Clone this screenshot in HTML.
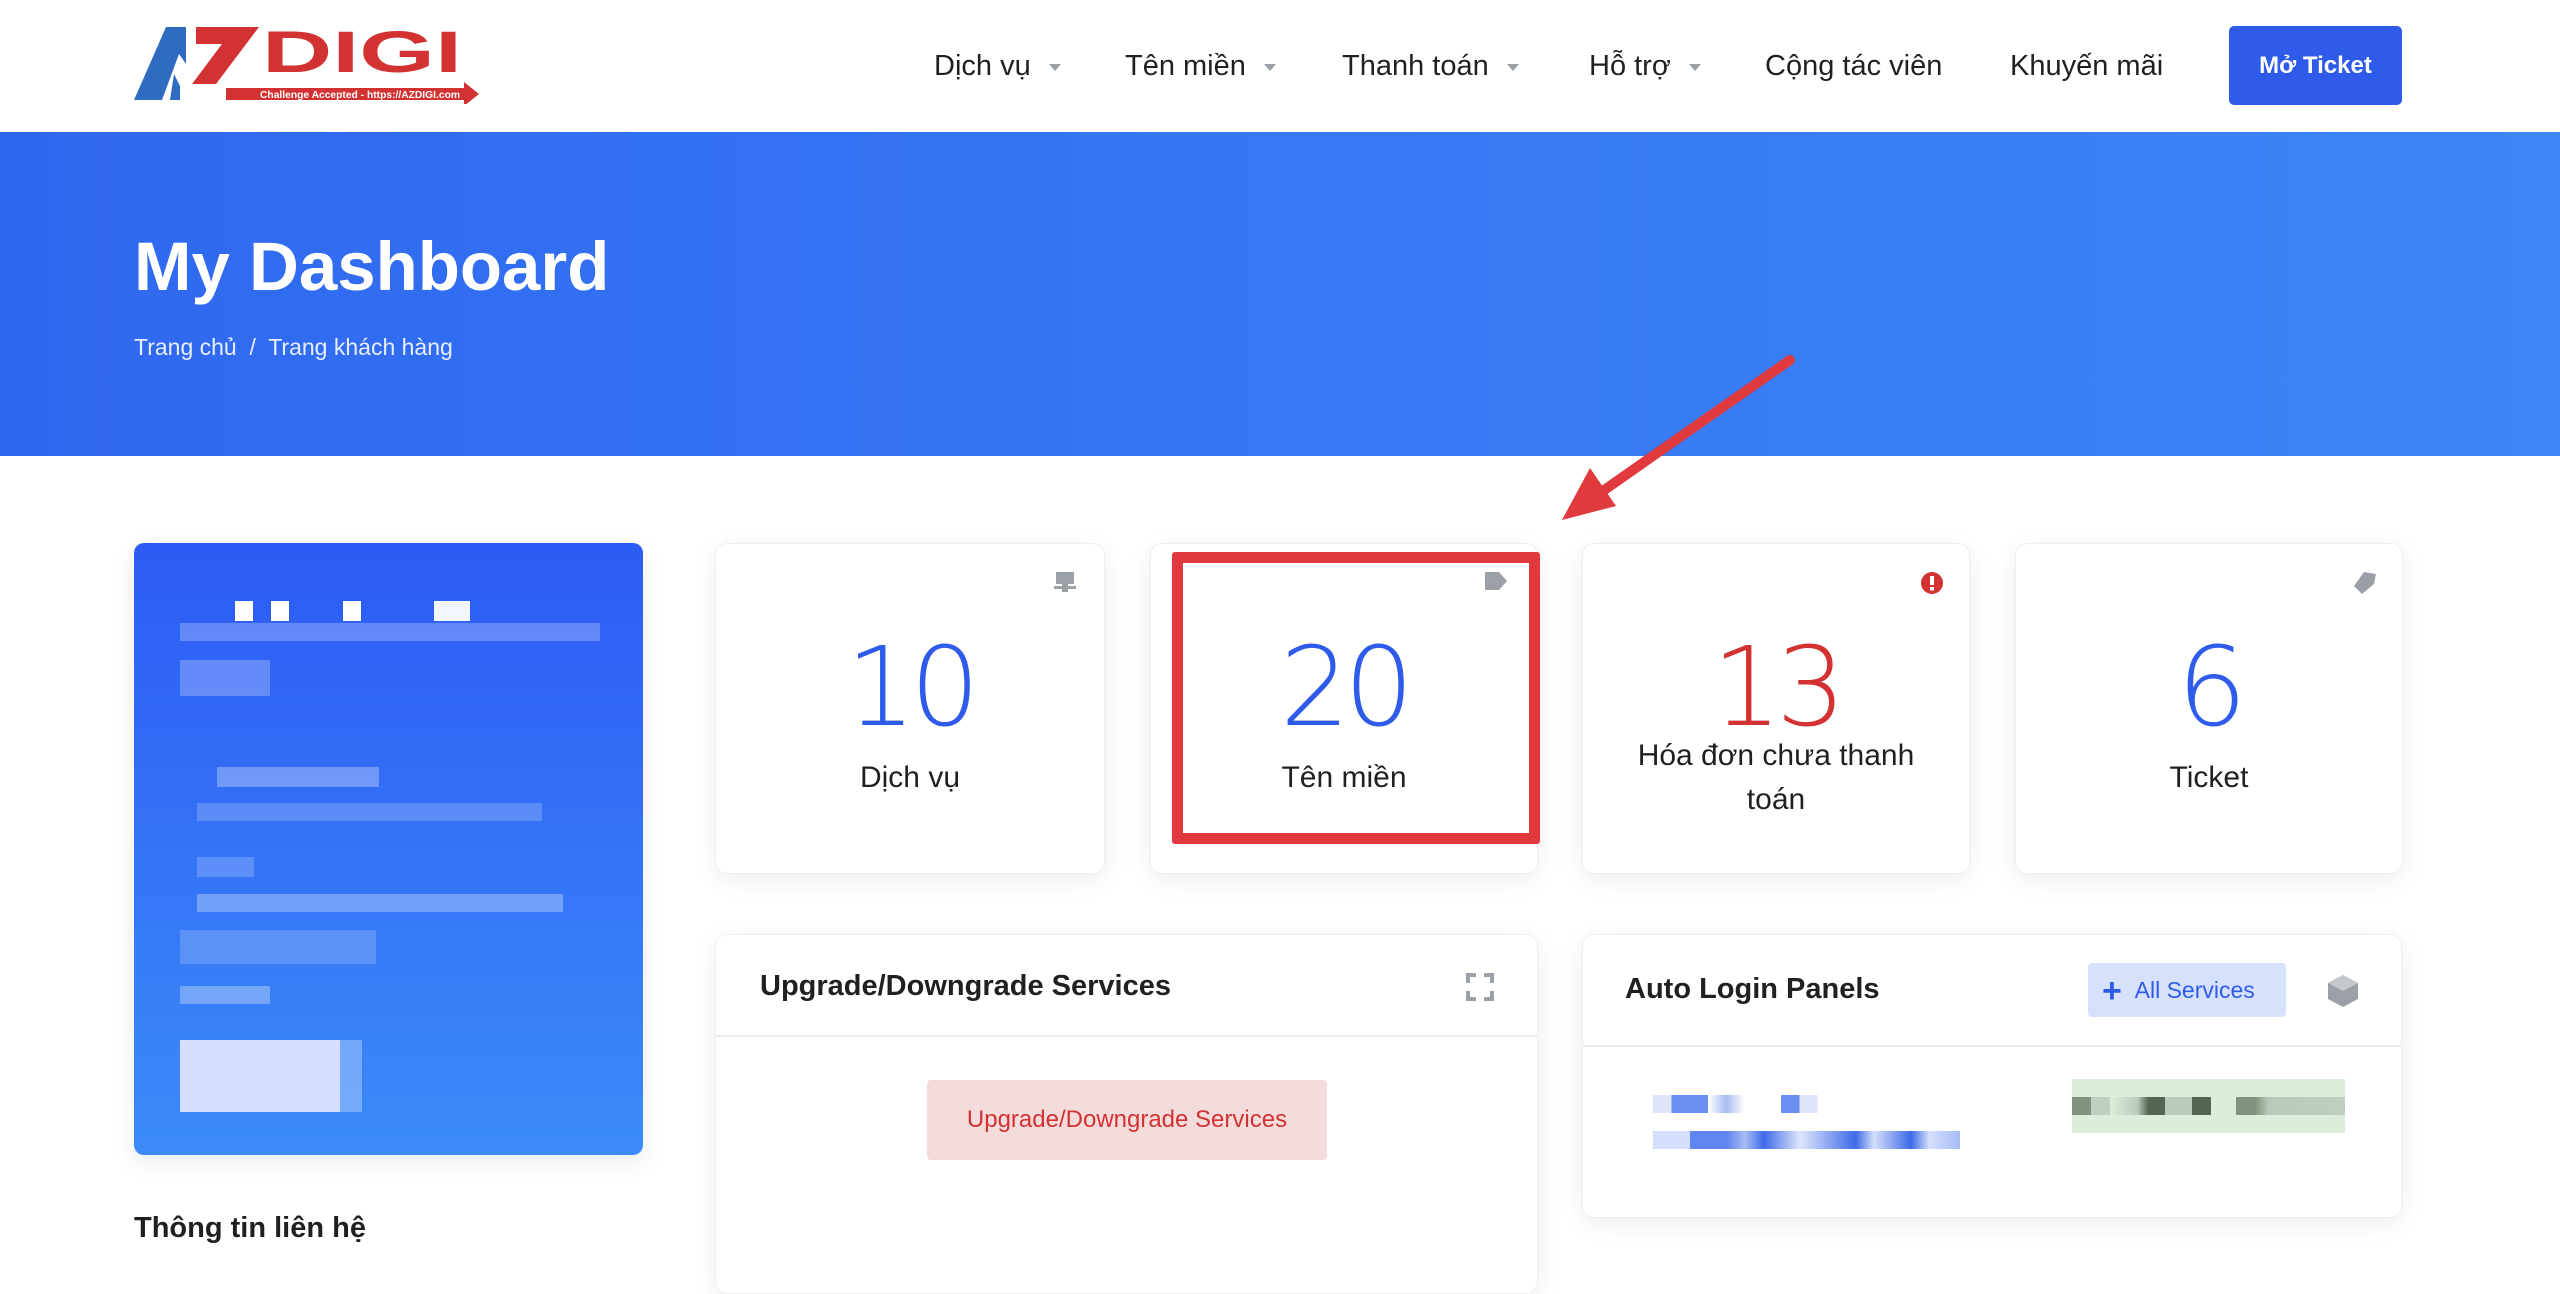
<!DOCTYPE html>
<html><head><meta charset="utf-8"><style>
*{margin:0;padding:0;box-sizing:border-box}
body{width:2560px;height:1244px;overflow:hidden;background:#fff;font-family:"Liberation Sans",sans-serif;position:relative;color:#1e2022}
.a{position:absolute}
.nav{font-size:29px;color:#1e2022;top:50px}
.car{display:inline-block;width:0;height:0;border-left:6px solid transparent;border-right:6px solid transparent;border-top:7px solid #9aa0a6;vertical-align:middle;margin-left:18px}
.card{position:absolute;background:#fff;border-radius:12px;box-shadow:0 6px 24px rgba(0,0,0,.07);border:1px solid #f0f0f0}
.num{position:absolute;left:0;right:0;text-align:center;font-family:"DejaVu Sans ExtraLight","DejaVu Sans","Liberation Sans",sans-serif;font-weight:200;font-size:110px;letter-spacing:-6px;color:#2f5bea;top:88px;line-height:1}
.lbl{position:absolute;left:0;right:0;text-align:center;font-size:30px;color:#1e2022;line-height:44px}
.px{position:absolute;background:rgba(255,255,255,.3)}
</style></head><body>
<svg class="a" style="left:134px;top:24px" width="345" height="80" viewBox="0 0 345 80">
<polygon points="0,76 32,3 52,3 52,40 45,30 28,76" fill="#2f6bc1"/>
<polygon points="36,76 40,50 46,62 46,76" fill="#2f6bc1"/>
<polygon points="62,3 125,3 82,60 58,60 88,20 62,20" fill="#d33232"/>
<text x="128" y="48" font-family="Liberation Sans" font-weight="bold" font-size="58" fill="#d33232" textLength="200" lengthAdjust="spacingAndGlyphs">DIGI</text>
<polygon points="92,64 330,64 330,58 345,70 330,82 330,76 92,76" fill="#d33232"/>
<text x="126" y="74" font-family="Liberation Sans" font-weight="bold" font-size="10" fill="#fff" textLength="200" lengthAdjust="spacingAndGlyphs">Challenge Accepted - https://AZDIGI.com</text>
</svg>
<div class="a nav" style="left:934px">Dịch vụ<span class="car"></span></div>
<div class="a nav" style="left:1125px">Tên miền<span class="car"></span></div>
<div class="a nav" style="left:1342px">Thanh toán<span class="car"></span></div>
<div class="a nav" style="left:1589px">Hỗ trợ<span class="car"></span></div>
<div class="a nav" style="left:1765px">Cộng tác viên</div>
<div class="a nav" style="left:2010px">Khuyến mãi</div>
<div class="a" style="left:2229px;top:26px;width:173px;height:79px;background:#2f5bea;border-radius:5px;color:#fff;font-size:24px;font-weight:bold;text-align:center;line-height:79px">Mở Ticket</div>
<div class="a" style="left:0;top:132px;width:2560px;height:324px;background:linear-gradient(90deg,#2f68f0,#3c86f6)"></div>
<div class="a" style="left:134px;top:227px;font-size:69px;font-weight:bold;color:#fff">My Dashboard</div>
<div class="a" style="left:134px;top:334px;font-size:23px;color:#e6eeff">Trang chủ &nbsp;/&nbsp; Trang khách hàng</div>
<svg class="a" style="left:1540px;top:340px" width="270" height="200">
<line x1="250" y1="20" x2="50" y2="160" stroke="#e0393e" stroke-width="10" stroke-linecap="round"/>
<polygon points="22,180 50,128 76,166" fill="#e0393e"/>
</svg>
<div class="a" style="left:134px;top:543px;width:509px;height:612px;border-radius:10px;background:linear-gradient(180deg,#2d5bf5,#3b8bf8);box-shadow:0 8px 24px rgba(0,0,0,.08)"></div>
<div class="px" style="left:235px;top:601px;width:18px;height:20px;background:#fff"></div>
<div class="px" style="left:271px;top:601px;width:18px;height:20px;background:#fff"></div>
<div class="px" style="left:343px;top:601px;width:18px;height:20px;background:#fff"></div>
<div class="px" style="left:434px;top:601px;width:36px;height:20px;background:#f4f6ff"></div>
<div class="px" style="left:180px;top:623px;width:420px;height:18px;background:rgba(255,255,255,.25)"></div>
<div class="px" style="left:180px;top:660px;width:90px;height:36px;background:rgba(255,255,255,.25)"></div>
<div class="px" style="left:217px;top:767px;width:162px;height:20px"></div>
<div class="px" style="left:197px;top:803px;width:345px;height:18px;background:rgba(255,255,255,.2)"></div>
<div class="px" style="left:197px;top:857px;width:57px;height:20px;background:rgba(255,255,255,.2)"></div>
<div class="px" style="left:197px;top:894px;width:366px;height:18px"></div>
<div class="px" style="left:180px;top:930px;width:196px;height:34px;background:rgba(255,255,255,.18)"></div>
<div class="px" style="left:180px;top:986px;width:90px;height:18px"></div>
<div class="px" style="left:180px;top:1040px;width:160px;height:72px;background:#d5dffb"></div>
<div class="px" style="left:340px;top:1040px;width:22px;height:72px;background:rgba(255,255,255,.3)"></div>
<div class="a" style="left:134px;top:1212px;font-size:29px;font-weight:bold;color:#1e2022">Thông tin liên hệ</div>
<div class="card" style="left:715px;top:543px;width:390px;height:331px">
<svg class="a" style="left:338px;top:28px" width="22" height="22"><rect x="2" y="0" width="18" height="12" fill="#9aa0a6"/><rect x="0" y="14" width="22" height="3" fill="#9aa0a6"/><rect x="8" y="12" width="6" height="8" fill="#9aa0a6"/></svg>
<div class="num">10</div><div class="lbl" style="top:212px">Dịch vụ</div></div>
<div class="card" style="left:1150px;top:543px;width:388px;height:331px">
<div class="num">20</div><div class="lbl" style="top:212px">Tên miền</div></div>
<div class="a" style="left:1172px;top:552px;width:368px;height:292px;border:11px solid #e0393e;border-radius:3px"></div>
<svg class="a" style="left:1485px;top:572px" width="22" height="18"><polygon points="0,0 14,0 22,9 14,18 0,18" fill="#9aa0a6"/></svg>
<div class="card" style="left:1582px;top:543px;width:388px;height:331px">
<svg class="a" style="left:338px;top:28px" width="22" height="22"><circle cx="11" cy="11" r="11" fill="#d33232"/><rect x="9" y="4" width="4" height="9" fill="#fff"/><rect x="9" y="15" width="4" height="3.5" fill="#fff"/></svg>
<div class="num" style="color:#d33232">13</div><div class="lbl" style="top:190px">Hóa đơn chưa thanh<br>toán</div></div>
<div class="card" style="left:2015px;top:543px;width:388px;height:331px">
<svg class="a" style="left:338px;top:28px" width="22" height="22"><polygon points="10,0 22,2 20,12 8,22 0,14" fill="#9aa0a6"/></svg>
<div class="num">6</div><div class="lbl" style="top:212px">Ticket</div></div>
<div class="card" style="left:715px;top:934px;width:823px;height:360px">
<div class="a" style="left:44px;top:35px;font-size:29px;font-weight:bold;color:#1e2022">Upgrade/Downgrade Services</div>
<svg class="a" style="left:750px;top:38px" width="28" height="28" fill="none" stroke="#9aa0a6" stroke-width="4"><path d="M2 10V2h8M18 2h8v8M26 18v8h-8M10 26H2v-8"/></svg>
<div class="a" style="left:0;right:0;top:100px;height:2px;background:#ececec"></div>
<div class="a" style="left:211px;top:145px;width:400px;height:80px;background:#f4dcdc;border-radius:4px;color:#d33232;font-size:24px;text-align:center;line-height:80px">Upgrade/Downgrade Services</div>
</div>
<div class="card" style="left:1582px;top:934px;width:820px;height:284px">
<div class="a" style="left:42px;top:38px;font-size:29px;font-weight:bold;color:#1e2022">Auto Login Panels</div>
<div class="a" style="left:505px;top:28px;width:198px;height:54px;background:#d6e2fc;border-radius:4px;color:#2f5bea;font-size:23px;line-height:54px;padding-left:14px"><b style="font-size:34px;vertical-align:-4px">+</b>&nbsp;&nbsp;All Services</div>
<svg class="a" style="left:745px;top:40px" width="30" height="32"><polygon points="15,0 30,8 30,24 15,32 0,24 0,8" fill="#9aa0a6"/><polygon points="15,0 30,8 15,16 0,8" fill="#c6c9cc"/></svg>
<div class="a" style="left:0;right:0;top:110px;height:2px;background:#ececec"></div>
<div class="a" style="left:70px;top:160px;width:183px;height:18px;background:linear-gradient(90deg,#dfe6fb 10%,#6b8ef0 10%,#6b8ef0 30%,#fff 30%,#a8bcf4 40%,#fff 50%,#fff 70%,#6b8ef0 70%,#6b8ef0 80%,#dfe6fb 80%,#dfe6fb 90%,#fff 90%)"></div>
<div class="a" style="left:70px;top:196px;width:307px;height:18px;background:linear-gradient(90deg,#d5dffb 12%,#5f86ef 12%,#5f86ef 24%,#a8bcf4 30%,#3d6ae9 36%,#dfe6fb 48%,#3d6ae9 66%,#d5dffb 72%,#3d6ae9 84%,#d5dffb 90%,#a8bcf4 100%)"></div>
<div class="a" style="left:489px;top:144px;width:273px;height:54px;background:#dbeedb"></div>
<div class="a" style="left:489px;top:162px;width:273px;height:18px;background:linear-gradient(90deg,#7f937f 7%,#bfcfbf 7%,#bfcfbf 14%,#dbeedb 14%,#bccabc 24%,#536553 28%,#536553 34%,#bccabc 34%,#bccabc 44%,#536553 44%,#536553 51%,#dbeedb 51%,#dbeedb 60%,#7f937f 60%,#7f937f 67%,#b9c9b9 72%,#bfcfbf 100%)"></div>
</div>
</body></html>
